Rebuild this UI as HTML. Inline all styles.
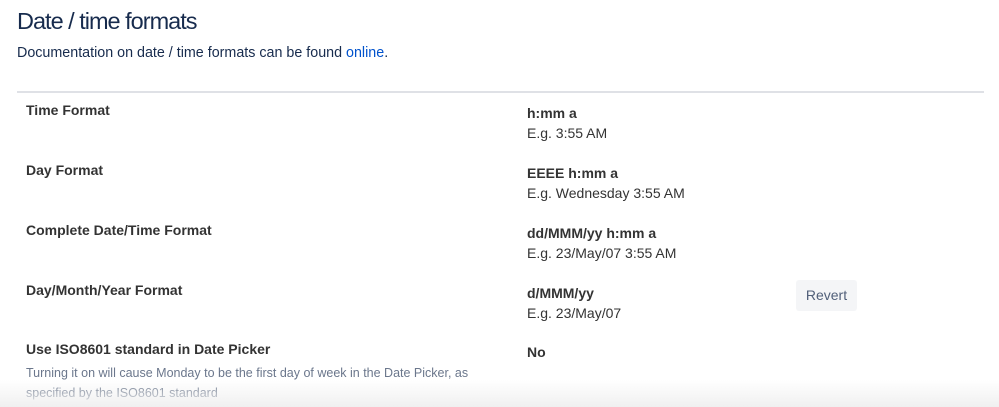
<!DOCTYPE html>
<html><head><style>
body{margin:0;width:999px;height:407px;overflow:hidden;background:#fff;font-family:"Liberation Sans",sans-serif;position:relative}
.a{position:absolute;white-space:nowrap}
h1{position:absolute;left:17px;top:8px;margin:0;font-size:23.5px;letter-spacing:-1px;font-weight:normal;color:#172b4d}
.sub{left:17px;top:45px;font-size:14.3px;color:#172b4d}
.sub span{color:#0052cc}
.hr{position:absolute;left:17px;top:91px;width:967px;height:2px;background:#dfe1e6}
.l{left:26px;font-size:14px;font-weight:bold;color:#333}
.v{left:527px;font-size:14px;font-weight:bold;color:#333}
.e{left:527px;font-size:14px;color:#333}
.btn{position:absolute;left:796px;top:280px;width:61px;height:31px;background:#f4f5f7;border-radius:3px;color:#505f79;font-size:14px;text-align:center;line-height:31px}
.d{left:26px;font-size:12.5px;color:#6b778c;line-height:20px}
.fade{position:absolute;left:0;top:380px;width:999px;height:27px;background:linear-gradient(#fff0,#f0f0f0)}
</style></head><body>
<h1>Date / time formats</h1>
<div class="a sub">Documentation on date / time formats can be found <span>online</span>.</div>
<div class="hr"></div>
<div class="a l" style="top:102px">Time Format</div>
<div class="a v" style="top:105px">h:mm a</div>
<div class="a e" style="top:125px">E.g. 3:55 AM</div>
<div class="a l" style="top:162px">Day Format</div>
<div class="a v" style="top:165px">EEEE h:mm a</div>
<div class="a e" style="top:185px">E.g. Wednesday 3:55 AM</div>
<div class="a l" style="top:222px">Complete Date/Time Format</div>
<div class="a v" style="top:225px">dd/MMM/yy h:mm a</div>
<div class="a e" style="top:245px">E.g. 23/May/07 3:55 AM</div>
<div class="a l" style="top:282px">Day/Month/Year Format</div>
<div class="a v" style="top:285px">d/MMM/yy</div>
<div class="a e" style="top:305px">E.g. 23/May/07</div>
<div class="btn">Revert</div>
<div class="a l" style="top:341px">Use ISO8601 standard in Date Picker</div>
<div class="a v" style="top:344px">No</div>
<div class="a d" style="top:363px">Turning it on will cause Monday to be the first day of week in the Date Picker, as<br>specified by the ISO8601 standard</div>
<div class="fade"></div>
</body></html>
